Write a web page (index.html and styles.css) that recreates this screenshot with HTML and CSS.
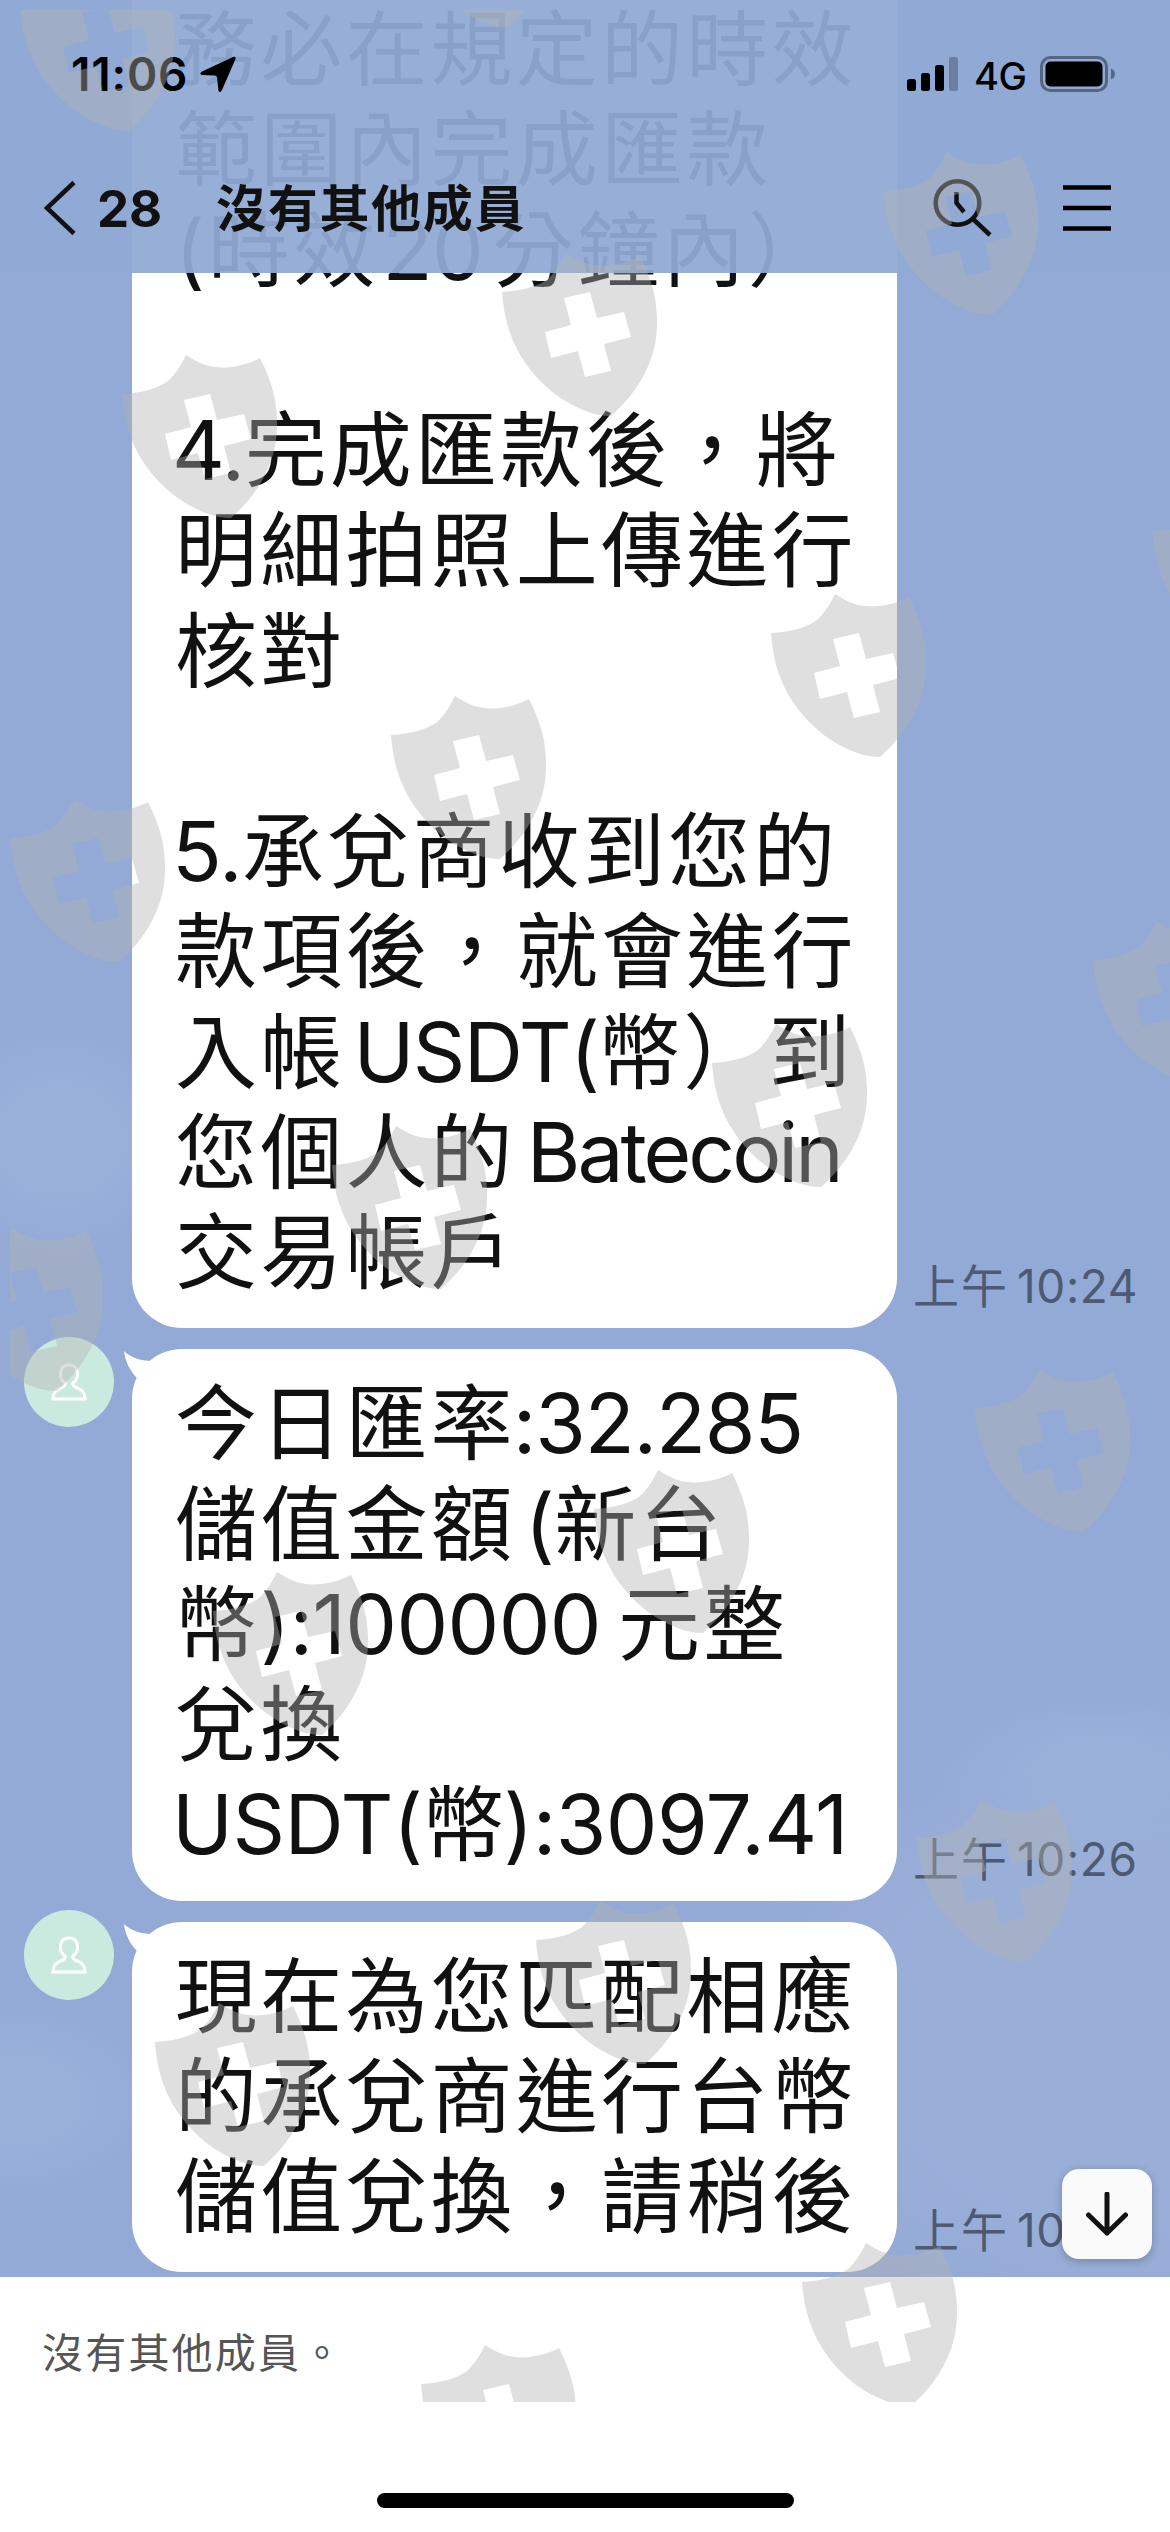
FILE: index.html
```html
<!DOCTYPE html>
<html lang="zh-Hant">
<head>
    <meta charset="UTF-8">
    <meta name="viewport" content="width=device-width, initial-scale=1.0">
    <title>Chat</title>
    <link rel="stylesheet" href="styles.css">
</head>
<body>
    <div class="phone">
        <header class="top">
            <div class="status">
                <span class="clock">11:06</span>
                <svg class="location" width="36" height="37" viewBox="0 0 36 37"><path d="M33 1 Q36 0 35.5 3 L22 34 Q20 37.500 18.500 35 L17 21 Q16.500 19.500 15 19.500 L1.500 19 Q-1 17.500 2 15.500 Z"/></svg>
                <div class="status-right">
                    <svg width="52" height="35" viewBox="0 0 52 35">
                        <rect x="0" y="22" width="9" height="12" rx="2.500"/>
                        <rect x="14" y="16" width="9" height="18" rx="2.500"/>
                        <rect x="28" y="8" width="9" height="26" rx="2.500"/>
                        <rect x="42" y="0" width="9" height="34" rx="2.500" opacity=".25"/>
                    </svg>
                    <span class="network">4G</span>
                    <svg width="76" height="36" viewBox="0 0 76 36">
                        <rect x="1.500" y="1.500" width="65" height="33" rx="9" fill="none" stroke="#000" stroke-opacity=".4" stroke-width="3"/>
                        <rect x="5.500" y="5.500" width="57" height="25" rx="5"/>
                        <path d="M71 12.500 Q75 14 75 18 Q75 22 71 23.500 Z" opacity=".4"/>
                    </svg>
                </div>
            </div>
            <div class="navbar">
                <svg class="back" width="34" height="56" viewBox="0 0 34 56"><path d="M31 2.500 L4 28 L31 53.500"/></svg>
                <span class="unread">28</span>
                <h1>沒有其他成員</h1>
                <svg class="search" width="60" height="60" viewBox="0 0 60 60"><circle cx="25.500" cy="25" r="21.800"/><path d="M24.500 14 V25 L32 34"/><path d="M41 41 L58 57"/></svg>
                <svg class="menu" width="48" height="46" viewBox="0 0 48 46"><path d="M0 2.500 H48 M0 23 H48 M0 43.500 H48"/></svg>
            </div>
        </header>

        <main class="chat">
            <div class="message">
                <div class="avatar-col"></div>
                <div class="bubble bubble-cut">
                    <p>務必在規定的時效</p>
                    <p>範圍內完成匯款</p>
                    <p>(時效<span class="num spaced">20</span>分鐘內）</p>
                    <p>&nbsp;</p>
                    <p><span class="num first">4.</span>完成匯款後，將</p>
                    <p>明細拍照上傳進行</p>
                    <p>核對</p>
                    <p>&nbsp;</p>
                    <p><span class="num first">5.</span>承兌商收到您的</p>
                    <p>款項後，就會進行</p>
                    <p>入帳<span class="latin">USDT(</span>幣）到</p>
                    <p>您個人的<span class="latin word">Batecoin</span></p>
                    <p>交易帳戶</p>
                </div>
                <span class="time">上午<span class="hour">10:24</span></span>
            </div>

            <div class="message">
                <div class="avatar-col">
                    <div class="avatar"><svg width="36" height="38" viewBox="0 0 36 38"><path d="M14 20 C7 15 8 2 18 2 C28 2 29 15 22 20 Q21 22 24 24 C32 27 34 30 34 36 H2 C2 30 4 27 12 24 Q15 22 14 20 Z"/></svg></div>
                </div>
                <div class="bubble">
                    <svg class="tail" width="34" height="34" viewBox="0 0 34 34"><path d="M0 0 C6 6 16 10 28 10 L34 34 L10 34 L13 27 C6 20 1 10 0 0 Z"/></svg>
                    <p>今日匯率<span class="num rate">:32.285</span></p>
                    <p>儲值金額<span class="num gap">(</span>新台</p>
                    <p>幣<span class="num">):100000</span><span class="gap-wide"></span>元整</p>
                    <p>兌換</p>
                    <p><span class="num first">USDT(</span>幣<span class="num total">):3097.41</span></p>
                </div>
                <span class="time">上午<span class="hour">10:26</span></span>
            </div>

            <div class="message">
                <div class="avatar-col">
                    <div class="avatar"><svg width="36" height="38" viewBox="0 0 36 38"><path d="M14 20 C7 15 8 2 18 2 C28 2 29 15 22 20 Q21 22 24 24 C32 27 34 30 34 36 H2 C2 30 4 27 12 24 Q15 22 14 20 Z"/></svg></div>
                </div>
                <div class="bubble">
                    <svg class="tail" width="34" height="34" viewBox="0 0 34 34"><path d="M0 0 C6 6 16 10 28 10 L34 34 L10 34 L13 27 C6 20 1 10 0 0 Z"/></svg>
                    <p>現在為您匹配相應</p>
                    <p>的承兌商進行台幣</p>
                    <p>儲值兌換，請稍後</p>
                </div>
                <span class="time">上午<span class="hour">10:26</span></span>
            </div>

            <button class="scroll-down">
                <svg width="42" height="44" viewBox="0 0 42 44"><path d="M21 2 V41 M2.500 23 L21 41 L39.500 23"/></svg>
            </button>
        </main>

        <footer class="bottom">
            <p>沒有其他成員。</p>
            <div class="home-bar"></div>
        </footer>

        <!-- shield watermark over the whole screen -->
        <svg class="watermark" width="1160" height="2392" viewBox="10 10 1160 2392">
            <defs>
                <path id="shield" fill-rule="evenodd" d="M0 39 C20 38 37 33 46 26 C54 19 60 8 64 0 C78 9 88 12.500 101 12.500 C113 12.500 126 9 138 3 C145 17 150 30 153 45 C159 82 152 110 132 138 C126 146 118 155 109 163 C100 163 92 161 86 159 C62 150 42 135 27 115 C8 90 2 65 0 39 Z M62 45 L69 72 L43 79 L49 105 L76 98 L83 124 L109 118 L102 91 L129 84 L122 59 L95 65 L88 39 Z"/>
            </defs>
            <use href="#shield" x="20" y="-32"/>
            <use href="#shield" x="400" y="-136"/>
            <use href="#shield" x="883" y="152"/>
            <use href="#shield" x="502" y="253"/>
            <use href="#shield" x="122" y="355"/>
            <use href="#shield" x="1152" y="492"/>
            <use href="#shield" x="771" y="594"/>
            <use href="#shield" x="391" y="696"/>
            <use href="#shield" x="10" y="799"/>
            <use href="#shield" x="1093" y="921"/>
            <use href="#shield" x="712" y="1024"/>
            <use href="#shield" x="332" y="1126"/>
            <use href="#shield" x="-52" y="1228"/>
            <use href="#shield" x="975" y="1369"/>
            <use href="#shield" x="594" y="1470"/>
            <use href="#shield" x="213" y="1572"/>
            <use href="#shield" x="917" y="1799"/>
            <use href="#shield" x="536" y="1901"/>
            <use href="#shield" x="155" y="2003"/>
            <use href="#shield" x="802" y="2243"/>
            <use href="#shield" x="421" y="2345"/>
        </svg>
    </div>
</body>
</html>
```

FILE: styles.css
```css
* {
    box-sizing: border-box;
    margin: 0;
    padding: 0;
}

body {
    font-family: Inter, "Noto Sans CJK TC", sans-serif;
    color: #111;
    background: #fff;
}

.phone {
    position: relative;
    display: flex;
    flex-direction: column;
    width: 1170px;
    height: 2532px;
    overflow: hidden;
}

/* Header, floats over the messages */
.top {
    position: absolute;
    top: 0;
    left: 0;
    z-index: 2;
    width: 100%;
    height: 273px;
    background: rgba(145, 169, 212, 0.94);
}

.status {
    display: flex;
    align-items: center;
    height: 148px;
    padding: 0 54px 0 71px;
    color: #000;
}

.clock {
    width: 129px;
    font-size: 46px;
    font-weight: 600;
    letter-spacing: 0.8px;
}

.status-right {
    display: flex;
    align-items: center;
    margin-left: auto;
}

.network {
    width: 66px;
    margin: 3px 0 0 15px;
    font-size: 38px;
    font-weight: 500;
    letter-spacing: -0.5px;
}

.navbar {
    display: flex;
    align-items: center;
    height: 120px;
    padding: 0 59px 0 43px;
}

.back,
.search,
.menu {
    fill: none;
    stroke: #111;
    stroke-width: 4.5;
}

.unread {
    width: 119px;
    margin-left: 20px;
    font-size: 51px;
    font-weight: 650;
}

.navbar h1 {
    padding-bottom: 6px;
    font-size: 50px;
    font-weight: 700;
    letter-spacing: 1.7px;
}

.search {
    margin-left: auto;
}

.menu {
    margin-left: 71px;
    stroke: #000;
}

/* Messages */
.chat {
    position: relative;
    display: flex;
    flex-direction: column;
    gap: 21px;
    height: 2277px;
    flex-shrink: 0;
    overflow: hidden;
    background:
        radial-gradient(ellipse 150px 130px at 60px 1140px, #9ab1d9 30%, rgba(154, 177, 217, 0) 100%),
        radial-gradient(ellipse 170px 110px at 10px 2100px, #9ab1d9 30%, rgba(154, 177, 217, 0) 100%),
        radial-gradient(ellipse 170px 90px at 1100px 1770px, #9ab1d9 20%, rgba(154, 177, 217, 0) 100%),
        radial-gradient(ellipse 420px 330px at 1130px 2030px, #99afd8 60%, rgba(153, 175, 216, 0) 100%),
        #93a9d6;
}

.message {
    display: flex;
    align-items: flex-end;
    flex-shrink: 0;
}

.avatar-col {
    align-self: flex-start;
    width: 132px;
    height: 50px;
    padding-left: 24px;
}

.avatar {
    display: flex;
    align-items: center;
    justify-content: center;
    width: 90px;
    height: 90px;
    margin-top: -12px;
    border-radius: 50%;
    background: #cbeadf;
}

.avatar svg {
    fill: none;
    stroke: #fff;
    stroke-width: 3;
}

.bubble {
    position: relative;
    width: 765px;
    padding: 25px 0 25px 43px;
    border-radius: 50px;
    background: #fff;
}

.bubble-cut {
    padding-top: 0;
    border-radius: 0 0 50px 50px;
}

.bubble p {
    font-size: 82px;
    line-height: 100.25px;
    letter-spacing: 3.2px;
    white-space: nowrap;
}

.num {
    letter-spacing: -0.6px;
}

.first {
    margin-left: -3px;
}

.rate {
    margin-left: -3px;
    letter-spacing: -1.2px;
}

.total {
    margin-left: -4px;
}

.spaced {
    margin: 0 9px 0 4px;
}

.latin {
    margin-left: 8px;
    letter-spacing: -1.7px;
}

.word {
    margin-left: 11px;
    letter-spacing: -3px;
}

.gap {
    margin-left: 9px;
}

.gap-wide {
    margin-left: 17px;
}

.tail {
    position: absolute;
    top: 2px;
    left: -8px;
    fill: #fff;
}

.time {
    margin: 0 0 14px 16px;
    font-size: 46px;
    line-height: 56px;
    letter-spacing: 2px;
    white-space: nowrap;
    color: #4c5a74;
}

.hour {
    margin-left: 8px;
    letter-spacing: 0.6px;
}

.scroll-down {
    position: absolute;
    right: 18px;
    bottom: 18px;
    display: flex;
    align-items: center;
    justify-content: center;
    width: 90px;
    height: 90px;
    border: none;
    border-radius: 17px;
    background: #fafafa;
    box-shadow: 0 2px 8px rgba(0, 0, 0, 0.25);
}

.scroll-down svg {
    fill: none;
    stroke: #111;
    stroke-width: 5;
    stroke-linecap: round;
    stroke-linejoin: round;
}

/* Footer */
.bottom {
    display: flex;
    flex: 1;
    flex-direction: column;
    align-items: center;
    justify-content: space-between;
    padding: 46px 42px 24px;
}

.bottom p {
    align-self: flex-start;
    font-size: 41px;
    line-height: 60px;
    letter-spacing: 2.2px;
    color: #555;
}

.home-bar {
    width: 417px;
    height: 15px;
    border-radius: 8px;
    background: #000;
}

.watermark {
    position: absolute;
    top: 10px;
    left: 10px;
    z-index: 3;
    fill: rgba(179, 179, 179, 0.42);
    pointer-events: none;
}
```
